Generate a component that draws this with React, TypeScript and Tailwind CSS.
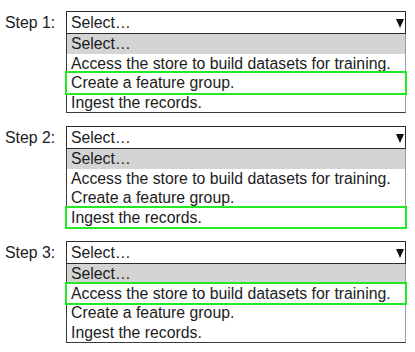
import React from 'react';

const options = [
    'Select…',
    'Access the store to build datasets for training.',
    'Create a feature group.',
    'Ingest the records.',
];

const steps = [
    { label: 'Step 1:', picked: 2 },
    { label: 'Step 2:', picked: 3 },
    { label: 'Step 3:', picked: 1 },
];

const Arrow = () => (
    <svg width="8" height="10" viewBox="0 0 8 10" className="block">
        <path d="M0 1 L8 1 L4 10 Z" fill="#111" />
    </svg>
);

const App: React.FC = () => {
    return (
        <div className="w-[415px] h-[352px] bg-white pt-[11px] font-['Liberation_Sans',Arial,sans-serif] text-[#1c1c1c] leading-none">
            {steps.map((step) => (
                <div key={step.label} className="flex mb-[13px]">
                    <div className="w-[66px] pl-[5px] pt-[4px] text-[15.8px]">{step.label}</div>
                    <div className="w-[340px]">
                        <div className="h-[23px] border border-[#2a2a2a] flex items-center justify-between pl-[4px] pr-[1px] text-[15.8px]">
                            <span>Select…</span>
                            <Arrow />
                        </div>
                        <div className="border border-t-0 border-l-[#3a3a3a] border-b-[#3a3a3a] border-r-[#9a9a9a]">
                            {options.map((opt, i) => (
                                <div
                                    key={opt}
                                    className={
                                        'h-[19.5px] flex items-center pl-[4px] pt-[1px] text-[15.8px] ' +
                                        (i === 0 ? 'bg-[#d4d4d4] ' : '') +
                                        (i === step.picked ? 'outline-2 outline-solid outline-[#22ea22] relative' : '')
                                    }
                                >
                                    {opt}
                                </div>
                            ))}
                        </div>
                    </div>
                </div>
            ))}
        </div>
    );
};

export default App;
